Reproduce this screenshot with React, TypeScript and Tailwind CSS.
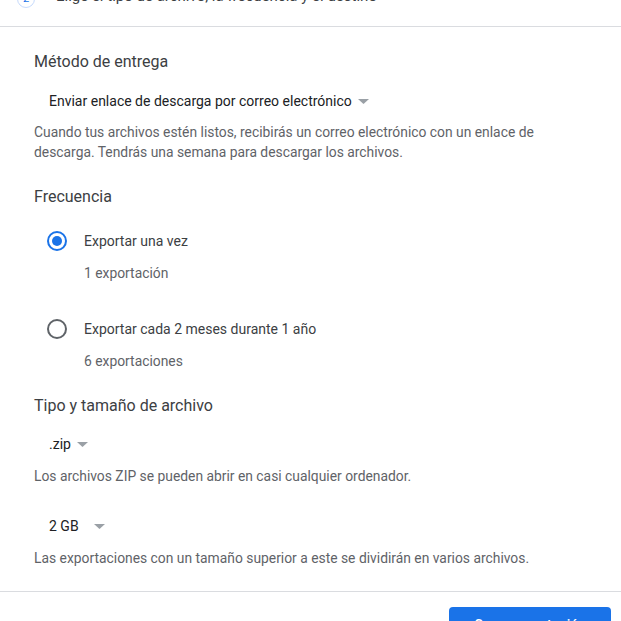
import React from 'react'

function Caret() {
  return (
    <svg width="11" height="5" viewBox="0 0 11 5" className="ml-[6px]">
      <path d="M0 0 L11 0 L5.5 5 Z" fill="#9aa0a6" />
    </svg>
  )
}

function Dropdown({ label, minW = '' }: { label: string; minW?: string }) {
  return (
    <div className="flex items-center pl-[15px] h-[24px] text-[14px] text-[#202124]">
      <span className={minW}>{label}</span>
      <Caret />
    </div>
  )
}

function Radio({ checked }: { checked: boolean }) {
  return (
    <div
      className={`w-[20px] h-[20px] rounded-full border-2 flex items-center justify-center ${
        checked ? 'border-[#1a73e8]' : 'border-[#5f6368]'
      }`}
    >
      {checked && <div className="w-[10px] h-[10px] rounded-full bg-[#1a73e8]" />}
    </div>
  )
}

function Option({ checked, label, sub }: { checked: boolean; label: string; sub: string }) {
  return (
    <div className="pl-[13px]">
      <div className="flex items-center h-[24px]">
        <Radio checked={checked} />
        <span className="ml-[17px] text-[14px] text-[#3c4043]">{label}</span>
      </div>
      <div className="pl-[37px] mt-[8px] h-[24px] leading-[24px] text-[13.85px] text-[#5f6368]">{sub}</div>
    </div>
  )
}

export default function App() {
  return (
    <div className="w-[621px] h-[621px] overflow-hidden bg-white font-['Roboto',sans-serif]">
      <div className="h-[27px] border-b border-[#dadce0] relative">
        <div className="absolute left-[17px] -top-[10px] w-[18px] h-[18px] rounded-full border border-[#c6dafc] flex items-center justify-center text-[11px] text-[#1a73e8] bg-white">
          2
        </div>
        <div className="absolute left-[56px] -top-[15px] text-[15px] text-[#3c4043]">
          Elige el tipo de archivo, la frecuencia y el destino
        </div>
      </div>

      <div className="pl-[34px] pr-[20px]">
        <div className="mt-[24px] h-[22px] leading-[22px] text-[16px] text-[#3c4043]">Método de entrega</div>
        <div className="mt-[16px]">
          <Dropdown label="Enviar enlace de descarga por correo electrónico" />
        </div>
        <div className="mt-[9px] max-w-[540px] text-[13.85px] leading-[20px] text-[#5f6368]">
          Cuando tus archivos estén listos, recibirás un correo electrónico con un enlace de descarga. Tendrás una
          semana para descargar los archivos.
        </div>

        <div className="mt-[24px] h-[22px] leading-[22px] text-[16px] text-[#3c4043]">Frecuencia</div>
        <div className="mt-[21px]">
          <Option checked label="Exportar una vez" sub="1 exportación" />
        </div>
        <div className="mt-[32px]">
          <Option checked={false} label="Exportar cada 2 meses durante 1 año" sub="6 exportaciones" />
        </div>

        <div className="mt-[22px] h-[22px] leading-[22px] text-[16px] text-[#3c4043]">Tipo y tamaño de archivo</div>
        <div className="mt-[15px]">
          <Dropdown label=".zip" />
        </div>
        <div className="mt-[8px] h-[24px] leading-[24px] text-[13.85px] text-[#5f6368]">
          Los archivos ZIP se pueden abrir en casi cualquier ordenador.
        </div>
        <div className="mt-[26px]">
          <Dropdown label="2 GB" minW="min-w-[39px]" />
        </div>
        <div className="mt-[8px] h-[24px] leading-[24px] text-[13.85px] text-[#5f6368]">
          Las exportaciones con un tamaño superior a este se dividirán en varios archivos.
        </div>
      </div>

      <div className="mt-[21px] border-t border-[#dadce0] flex justify-end pr-[10px] pt-[15px]">
        <button className="w-[162px] h-[36px] rounded-[4px] bg-[#1a73e8] text-white text-[14px] font-medium">
          Crear exportación
        </button>
      </div>
    </div>
  )
}
